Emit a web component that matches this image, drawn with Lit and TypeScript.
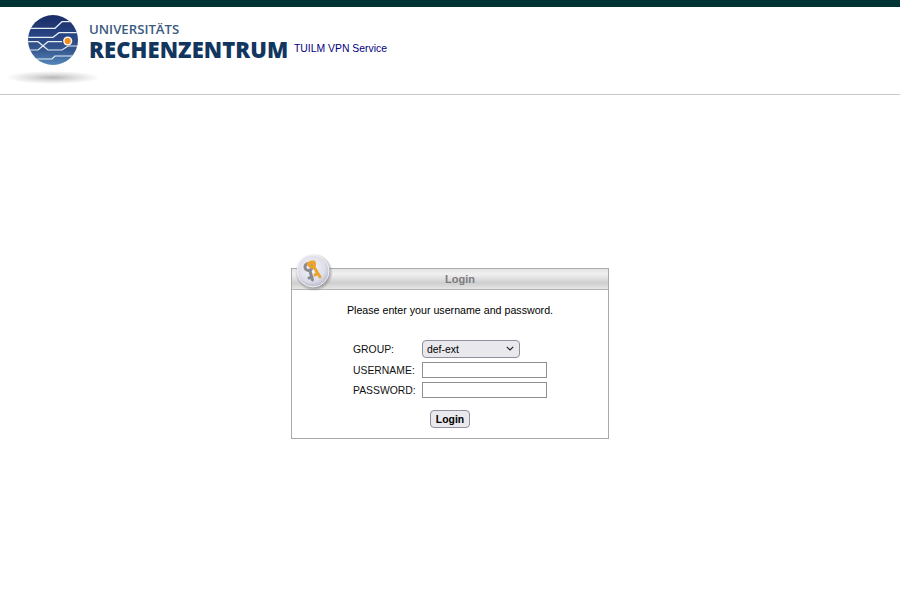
import { LitElement, html, css } from 'lit';
import { customElement, state } from 'lit/decorators.js';

@customElement('app-root')
export class AppRoot extends LitElement {
  @state()
  private _group = 'def-ext';

  private _renderGlobe() {
    return html`
      <svg class="globe" width="89" height="86" viewBox="0 7 89 86" aria-hidden="true">
        <defs>
          <linearGradient id="ball" x1="0" y1="0" x2="0" y2="1">
            <stop offset="0" stop-color="#1b2c66" />
            <stop offset="0.35" stop-color="#26417f" />
            <stop offset="0.7" stop-color="#35578f" />
            <stop offset="1" stop-color="#5488bb" />
          </linearGradient>
          <radialGradient id="shade">
            <stop offset="0" stop-color="#b8b8b8" />
            <stop offset="0.5" stop-color="#e0e0e0" />
            <stop offset="1" stop-color="#ffffff" />
          </radialGradient>
          <clipPath id="ballClip"><circle cx="53" cy="40" r="25" /></clipPath>
          <filter id="soft" x="-10%" y="-10%" width="120%" height="120%">
            <feGaussianBlur stdDeviation="0.35" />
          </filter>
        </defs>
        <ellipse cx="53" cy="77.5" rx="47" ry="6.5" fill="url(#shade)" />
        <g filter="url(#soft)">
          <circle cx="53" cy="40" r="25" fill="url(#ball)" />
          <g clip-path="url(#ballClip)" fill="none" stroke="#e6edf5" stroke-width="1.2">
            <path d="M75 21.7H62L55 28.3H26" />
            <path d="M26 37.3H53L59 32.7H78" />
            <path d="M26 41.7H38L48 50H62L68 46H80" />
            <path d="M26 50H38L48 41.7H62" />
            <path d="M33 59H52L55 56H76" />
          </g>
          <circle cx="67.7" cy="41" r="4.6" fill="#f7f7f7" />
          <circle cx="67.7" cy="41" r="3.1" fill="#f28c1e" />
        </g>
      </svg>
    `;
  }

  private _renderKeys() {
    return html`
      <svg class="keys" width="40" height="38" viewBox="0 0 40 38" aria-hidden="true">
        <defs>
          <radialGradient id="disc" cx="0.45" cy="0.4" r="0.62">
            <stop offset="0" stop-color="#f6f6f9" />
            <stop offset="0.7" stop-color="#dcdde8" />
            <stop offset="1" stop-color="#b4b5c8" />
          </radialGradient>
          <radialGradient id="discShadow">
            <stop offset="0.75" stop-color="#7d7d7d" stop-opacity="0.8" />
            <stop offset="1" stop-color="#8a8a8a" stop-opacity="0" />
          </radialGradient>
          <filter id="keySoft" x="-10%" y="-10%" width="120%" height="120%">
            <feGaussianBlur stdDeviation="0.4" />
          </filter>
        </defs>
        <circle cx="20" cy="19.5" r="19" fill="url(#discShadow)" />
        <circle cx="19" cy="18" r="16" fill="url(#disc)" stroke="#f4f4f8" stroke-width="1" />
        <g filter="url(#keySoft)">
          <g fill="none" stroke="#8a8a94" stroke-width="3" stroke-linecap="round">
            <circle cx="14.5" cy="14" r="3.5" />
            <path d="M16 18L18.5 27M18 24L15 25" />
          </g>
          <g fill="none" stroke="#eda42e" stroke-width="3" stroke-linecap="round">
            <path d="M14 11L20 9" />
            <circle cx="18" cy="11.5" r="2.6" />
            <path d="M20 14L26 24M23.5 20L21 22" />
          </g>
        </g>
      </svg>
    `;
  }

  private _renderChevron() {
    return html`
      <svg class="chevron" width="8" height="5" viewBox="0 0 8 5" aria-hidden="true">
        <path d="M0.8 0.8L4 4L7.2 0.8" fill="none" stroke="#222" stroke-width="1.2" />
      </svg>
    `;
  }

  override render() {
    return html`
      <div class="topbar"></div>
      <header class="header">
        <div class="logo">
          ${this._renderGlobe()}
          <div class="wordmark">
            <span class="uni">UNIVERSITÄTS</span>
            <span class="rz">RECHENZENTRUM</span>
          </div>
        </div>
        <span class="service">TUILM VPN Service</span>
      </header>

      <main class="main">
        <section class="box">
          ${this._renderKeys()}
          <div class="box-title"><span>Login</span></div>
          <div class="box-body">
            <p class="intro">Please enter your username and password.</p>
            <form class="form" @submit=${(e: Event) => e.preventDefault()}>
              <label for="group">GROUP:</label>
              <div class="select-wrap">
                <select id="group" .value=${this._group}>
                  <option>def-ext</option>
                </select>
                ${this._renderChevron()}
              </div>
              <label for="user">USERNAME:</label>
              <input id="user" type="text" />
              <label for="pass">PASSWORD:</label>
              <input id="pass" type="password" />
              <button type="submit">Login</button>
            </form>
          </div>
        </section>
      </main>
    `;
  }

  static override styles = css`
    :host {
      display: block;
      font-family: 'Liberation Sans', Arial, sans-serif;
      font-size: 12px;
      color: #000;
      background: #fff;
      min-height: 598px;
    }

    .topbar {
      height: 7px;
      background: #003333;
    }

    .header {
      display: flex;
      height: 88px;
      box-sizing: border-box;
      border-bottom: 1px solid #c8c8c8;
    }

    .logo {
      display: flex;
      width: 294px;
      flex: none;
    }

    .globe {
      flex: none;
      display: block;
      overflow: visible;
    }

    .wordmark {
      display: flex;
      flex-direction: column;
      padding-top: 15px;
      font-family: 'Open Sans', sans-serif;
      white-space: nowrap;
    }

    .uni {
      font-size: 13.2px;
      line-height: 15px;
      font-weight: 600;
      color: #3a5a80;
    }

    .rz {
      font-size: 22px;
      line-height: 24px;
      font-weight: 800;
      letter-spacing: 0.1px;
      color: #12365e;
    }

    .service {
      font-size: 10.4px;
      color: #000080;
      padding-top: 36px;
    }

    .main {
      display: flex;
      justify-content: center;
      padding-top: 173px;
    }

    .box {
      position: relative;
      width: 318px;
      height: 171px;
      box-sizing: border-box;
      border: 1px solid #a9a9a9;
    }

    .keys {
      position: absolute;
      top: -16px;
      left: 2px;
    }

    .box-title {
      height: 21px;
      box-sizing: border-box;
      border-bottom: 1px solid #b4b4b4;
      background: linear-gradient(#e4e4e4, #f0f0f0 25%, #dedede 50%, #cecece 70%, #e6e6e6);
      text-align: center;
      font-size: 11px;
      font-weight: 700;
      line-height: 20px;
      color: #7c7c7c;
      padding-left: 20px;
    }

    .box-body {
      display: flex;
      flex-direction: column;
      align-items: center;
    }

    .intro {
      margin: 14px 0 0;
      font-size: 10.67px;
      line-height: 13px;
    }

    .form {
      display: grid;
      grid-template-columns: 69px 125px;
      row-gap: 4px;
      align-items: center;
      margin: 23px 0 0;
      width: 194px;
      font-size: 10.4px;
    }

    label {
      color: #111;
      white-space: nowrap;
    }

    .select-wrap {
      position: relative;
      width: 98px;
      height: 18px;
    }

    .chevron {
      position: absolute;
      top: 6px;
      right: 6px;
      pointer-events: none;
    }

    select {
      display: block;
      appearance: none;
      width: 98px;
      height: 18px;
      box-sizing: border-box;
      font: 10.4px 'Liberation Sans', Arial, sans-serif;
      color: #000;
      background-color: #e9e9ed;
      border: 1px solid #8f8f9d;
      border-radius: 4px;
      padding: 0 0 0 4px;
    }

    input {
      width: 125px;
      height: 16px;
      box-sizing: border-box;
      border: 1px solid #8f8f8f;
      padding: 0 2px;
      font: 10.4px 'Liberation Sans', Arial, sans-serif;
      background: #fff;
    }

    button {
      grid-column: 1 / -1;
      justify-self: center;
      margin: 8px 0 0;
      width: 40px;
      height: 18px;
      padding: 0;
      font: 700 10.4px 'Liberation Sans', Arial, sans-serif;
      color: #000;
      background: #e9e9ed;
      border: 1px solid #8f8f9d;
      border-radius: 4px;
    }
  `;
}
